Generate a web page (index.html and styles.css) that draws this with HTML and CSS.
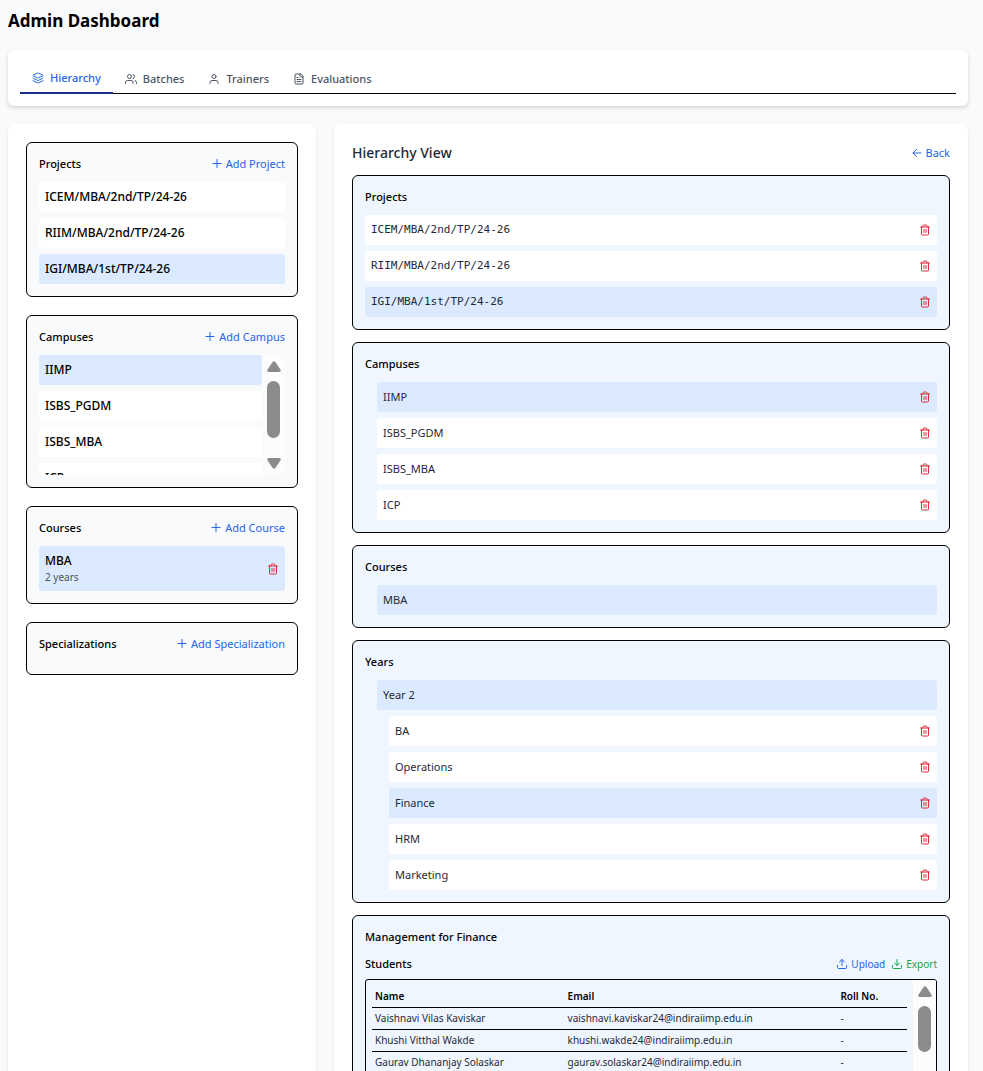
FILE: index.html
```
<!DOCTYPE html>
<html lang="en">
<head>
<meta charset="utf-8">
<meta name="viewport" content="width=device-width, initial-scale=1">
<title>Admin Dashboard</title>
<link rel="stylesheet" href="styles.css">
</head>
<body>
<svg class="sprite" aria-hidden="true">
  <symbol id="trash" viewBox="0 0 24 24"><path d="M3 6h18M19 6v14a2 2 0 0 1-2 2H7a2 2 0 0 1-2-2V6M8 6V4a2 2 0 0 1 2-2h4a2 2 0 0 1 2 2v2M10 11v6M14 11v6"/></symbol>
  <symbol id="plus" viewBox="0 0 24 24"><path d="M4 11h16M12 3v16"/></symbol>
  <symbol id="back" viewBox="0 0 24 24"><path d="M11 19l-7-7 7-7M20 12H4"/></symbol>
  <symbol id="layers" viewBox="0 0 24 24"><path d="M12.8 2.2a2 2 0 0 0-1.6 0L2.6 6.1a1 1 0 0 0 0 1.8l8.6 3.9a2 2 0 0 0 1.6 0l8.6-3.9a1 1 0 0 0 0-1.8ZM2 12a1 1 0 0 0 .6.9l8.6 3.9a2 2 0 0 0 1.6 0l8.6-3.9a1 1 0 0 0 .6-.9M2 17a1 1 0 0 0 .6.9l8.6 3.9a2 2 0 0 0 1.6 0l8.6-3.9a1 1 0 0 0 .6-.9"/></symbol>
  <symbol id="users" viewBox="0 0 24 24"><path d="M16 21v-2a4 4 0 0 0-4-4H5a4 4 0 0 0-4 4v2M23 21v-2a4 4 0 0 0-3-3.900M16 3.100a4 4 0 0 1 0 7.800"/><circle cx="9" cy="7" r="4"/></symbol>
  <symbol id="user" viewBox="0 0 24 24"><path d="M20 21v-2a4 4 0 0 0-4-4H8a4 4 0 0 0-4 4v2"/><circle cx="12" cy="7" r="4"/></symbol>
  <symbol id="file" viewBox="0 0 24 24"><path d="M15 2H6a2 2 0 0 0-2 2v16a2 2 0 0 0 2 2h12a2 2 0 0 0 2-2V7ZM14 2v4a2 2 0 0 0 2 2h4M10 9H8M16 13H8M16 17H8"/></symbol>
  <symbol id="upload" viewBox="0 0 24 24"><path d="M21 15v4a2 2 0 0 1-2 2H5a2 2 0 0 1-2-2v-4M17 8l-5-5-5 5M12 3v12"/></symbol>
  <symbol id="download" viewBox="0 0 24 24"><path d="M21 15v4a2 2 0 0 1-2 2H5a2 2 0 0 1-2-2v-4M7 10l5 5 5-5M12 15V3"/></symbol>
  <symbol id="arrow" viewBox="0 0 14 11"><path d="M5.6.9Q7-.6 8.4.9l5 7.6Q14.4 11 12 11H2Q-.4 11 .6 8.500Z"/></symbol>
</svg>
<div class="app">
  <h1 class="page-title">Admin Dashboard</h1>
  <div class="tabs-card">
    <nav class="tabs">
      <button class="tab active"><svg class="icon"><use href="#layers"/></svg>Hierarchy</button>
      <button class="tab"><svg class="icon"><use href="#users"/></svg>Batches</button>
      <button class="tab"><svg class="icon"><use href="#user"/></svg>Trainers</button>
      <button class="tab"><svg class="icon"><use href="#file"/></svg>Evaluations</button>
    </nav>
  </div>
  <div class="columns">
    <aside class="panel sidebar">
      <section class="card">
        <div class="card-head"><h3>Projects</h3><button class="link"><svg class="icon"><use href="#plus"/></svg>Add Project</button></div>
        <ul class="rows">
          <li class="row">ICEM/MBA/2nd/TP/24-26</li>
          <li class="row">RIIM/MBA/2nd/TP/24-26</li>
          <li class="row selected">IGI/MBA/1st/TP/24-26</li>
        </ul>
      </section>
      <section class="card">
        <div class="card-head"><h3>Campuses</h3><button class="link"><svg class="icon"><use href="#plus"/></svg>Add Campus</button></div>
        <div class="scroll campus-scroll">
          <ul class="rows">
            <li class="row selected">IIMP</li>
            <li class="row">ISBS_PGDM</li>
            <li class="row">ISBS_MBA</li>
            <li class="row">ICP</li>
          </ul>
          <div class="bar" aria-hidden="true"><svg class="arrow"><use href="#arrow"/></svg><span class="track"><span class="thumb"></span></span><svg class="arrow down"><use href="#arrow"/></svg></div>
        </div>
      </section>
      <section class="card">
        <div class="card-head"><h3>Courses</h3><button class="link"><svg class="icon"><use href="#plus"/></svg>Add Course</button></div>
        <ul class="rows">
          <li class="row selected"><div>MBA<p class="note">2 years</p></div><button class="delete" aria-label="Delete MBA"><svg class="icon"><use href="#trash"/></svg></button></li>
        </ul>
      </section>
      <section class="card">
        <div class="card-head"><h3>Specializations</h3><button class="link"><svg class="icon"><use href="#plus"/></svg>Add Specialization</button></div>
      </section>
    </aside>
    <main class="panel view">
      <div class="view-head"><h2>Hierarchy View</h2><button class="link"><svg class="icon"><use href="#back"/></svg>Back</button></div>
      <section class="card">
        <div class="card-head"><h3>Projects</h3></div>
        <ul class="rows mono">
          <li class="row">ICEM/MBA/2nd/TP/24-26<button class="delete" aria-label="Delete"><svg class="icon"><use href="#trash"/></svg></button></li>
          <li class="row">RIIM/MBA/2nd/TP/24-26<button class="delete" aria-label="Delete"><svg class="icon"><use href="#trash"/></svg></button></li>
          <li class="row selected">IGI/MBA/1st/TP/24-26<button class="delete" aria-label="Delete"><svg class="icon"><use href="#trash"/></svg></button></li>
        </ul>
      </section>
      <section class="card">
        <div class="card-head"><h3>Campuses</h3></div>
        <ul class="rows nested">
          <li class="row selected">IIMP<button class="delete" aria-label="Delete"><svg class="icon"><use href="#trash"/></svg></button></li>
          <li class="row">ISBS_PGDM<button class="delete" aria-label="Delete"><svg class="icon"><use href="#trash"/></svg></button></li>
          <li class="row">ISBS_MBA<button class="delete" aria-label="Delete"><svg class="icon"><use href="#trash"/></svg></button></li>
          <li class="row">ICP<button class="delete" aria-label="Delete"><svg class="icon"><use href="#trash"/></svg></button></li>
        </ul>
      </section>
      <section class="card">
        <div class="card-head"><h3>Courses</h3></div>
        <ul class="rows nested"><li class="row selected">MBA</li></ul>
      </section>
      <section class="card">
        <div class="card-head"><h3>Years</h3></div>
        <ul class="rows nested">
          <li class="row selected">Year 2</li>
          <li>
            <ul class="rows nested">
              <li class="row">BA<button class="delete" aria-label="Delete"><svg class="icon"><use href="#trash"/></svg></button></li>
              <li class="row">Operations<button class="delete" aria-label="Delete"><svg class="icon"><use href="#trash"/></svg></button></li>
              <li class="row selected">Finance<button class="delete" aria-label="Delete"><svg class="icon"><use href="#trash"/></svg></button></li>
              <li class="row">HRM<button class="delete" aria-label="Delete"><svg class="icon"><use href="#trash"/></svg></button></li>
              <li class="row">Marketing<button class="delete" aria-label="Delete"><svg class="icon"><use href="#trash"/></svg></button></li>
            </ul>
          </li>
        </ul>
      </section>
      <section class="card">
        <div class="card-head"><h3>Management for Finance</h3></div>
        <div class="card-head students"><h3>Students</h3>
          <div class="actions"><button class="link small"><svg class="icon"><use href="#upload"/></svg>Upload</button><button class="link small export"><svg class="icon"><use href="#download"/></svg>Export</button></div>
        </div>
        <div class="scroll table-box">
          <div class="table-wrap">
            <table>
              <thead><tr><th class="name">Name</th><th class="email">Email</th><th>Roll No.</th></tr></thead>
              <tbody>
                <tr><td>Vaishnavi Vilas Kaviskar</td><td>vaishnavi.kaviskar24@indiraiimp.edu.in</td><td>-</td></tr>
                <tr><td>Khushi Vitthal Wakde</td><td>khushi.wakde24@indiraiimp.edu.in</td><td>-</td></tr>
                <tr><td>Gaurav Dhananjay Solaskar</td><td>gaurav.solaskar24@indiraiimp.edu.in</td><td>-</td></tr>
              </tbody>
            </table>
          </div>
          <div class="bar" aria-hidden="true"><svg class="arrow"><use href="#arrow"/></svg><span class="track"><span class="thumb"></span></span><svg class="arrow down"><use href="#arrow"/></svg></div>
        </div>
      </section>
    </main>
  </div>
</div>
</body>
</html>
```
FILE: styles.css
```
* { box-sizing: border-box; margin: 0; padding: 0; }
body { background: #f9fafb; color: #000; font: 12px/18px "Noto Sans", "Open Sans", sans-serif; }
button { border: 0; background: none; font: inherit; color: inherit; cursor: pointer; }
ul { list-style: none; }
.sprite { position: absolute; width: 0; height: 0; }
.icon { width: 12px; height: 12px; flex: none; fill: none; stroke: currentColor; stroke-width: 2; stroke-linecap: round; stroke-linejoin: round; }

.app { height: 100vh; overflow: hidden; padding: 8px 15px 0 8px; }
.page-title { font-size: 17px; line-height: 26px; font-weight: 700; margin-bottom: 16px; }

.tabs-card { background: #fff; border-radius: 6px; padding: 12px; box-shadow: 0 2px 4px rgba(0, 0, 0, .15); margin-bottom: 18px; }
.tabs { display: flex; align-items: stretch; border-bottom: 1px solid #000; height: 32px; }
.tab { display: flex; align-items: center; gap: 6px; padding: 2px 12px 0; height: 32px; font-size: 11px; font-weight: 500; color: #4b5563; }
.tab.active { color: #2563eb; border-bottom: 2px solid #172f86; }

.columns { display: grid; grid-template-columns: repeat(3, minmax(0, 1fr)); gap: 18px; }
.panel { background: #fff; border-radius: 6px; padding: 18px; box-shadow: 0 1px 3px rgba(0, 0, 0, .1); display: flex; flex-direction: column; }
.sidebar { gap: 18px; font-weight: 500; }
.view { grid-column: span 2; gap: 12px; font-size: 11px; }

.card { border: 1px solid #000; border-radius: 6px; padding: 12px; background: #f9fafb; }
.view .card { background: #eff6ff; }
.card-head { display: flex; align-items: center; justify-content: space-between; margin-bottom: 9px; }
.card-head h3 { font-size: 11px; font-weight: 500; }
.card-head.students { margin-bottom: 6px; }
.view-head { display: flex; align-items: center; justify-content: space-between; }
.view-head h2 { font-size: 14px; line-height: 21px; font-weight: 500; color: #1f2937; }
.link { display: flex; align-items: center; gap: 3px; color: #2563eb; font-size: 11px; font-weight: 400; }
.link.small { font-size: 10px; }
.link.export { color: #16a34a; }
.actions { display: flex; gap: 6px; }

.rows { display: flex; flex-direction: column; gap: 6px; flex: 1; }
.nested { padding-left: 12px; }
.row { display: flex; align-items: center; justify-content: space-between; padding: 6px; background: #fff; border-radius: 3px; }
.view .row { color: #1f2937; }
.row.selected { background: #dbeafe; }
.mono { font-family: "DejaVu Sans Mono", monospace; }
.note { font-size: 10px; line-height: 15px; font-weight: 400; color: #4b5563; }
.row .delete { display: flex; color: #e02d3c; }

.scroll { display: flex; overflow: hidden; }
.campus-scroll { height: 120px; }
.bar { width: 23px; flex: none; display: flex; flex-direction: column; align-items: center; gap: 9px; padding: 6px 0; background: #fcfcfc; }
.arrow { width: 14px; height: 11px; fill: #8b8b8b; flex: none; }
.down { transform: rotate(180deg); }
.track { flex: 1; width: 13px; }
.thumb { display: block; width: 13px; height: 57px; border-radius: 7px; background: #8b8b8b; }
.table-box .thumb { height: 46px; }

.table-box { height: 144px; border: 1px solid #000; border-radius: 3px; }
.table-wrap { flex: 1; padding: 6px; }
table { width: 100%; border-collapse: separate; border-spacing: 0; table-layout: fixed; font-size: 10px; line-height: 15px; }
th, td { text-align: left; padding: 3px; border-bottom: 1px solid #000; white-space: nowrap; }
th { font-weight: 600; }
td { color: #1f2937; }
.name { width: 36%; }
.email { width: 51%; }
```
